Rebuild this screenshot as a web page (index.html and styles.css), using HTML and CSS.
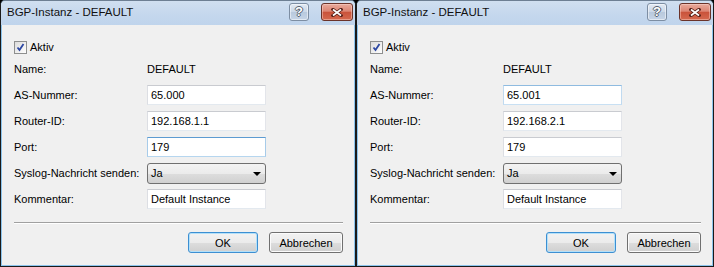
FILE: index.html
```html
<!DOCTYPE html>
<html lang="de">
<head>
    <meta charset="UTF-8">
    <title>BGP-Instanz - DEFAULT</title>
    <link rel="stylesheet" href="styles.css">
</head>
<body>
    <div class="desk">
        <div class="dialog">
            <div class="titlebar">
                <span class="title">BGP-Instanz - DEFAULT</span>
                <span class="tb-btn tb-help">?</span>
                <span class="tb-btn tb-close">
                    <svg width="12" height="9" viewBox="0 0 12 9"><path d="M2 1.5 L10 7.5 M10 1.5 L2 7.5" stroke="#5a231b" stroke-width="3.4" stroke-linecap="square"/><path d="M2 1.5 L10 7.5 M10 1.5 L2 7.5" stroke="#fff" stroke-width="1.6"/></svg>
                </span>
            </div>
            <div class="content">
                <div class="check-row">
                    <span class="checkbox"><svg width="11" height="11" viewBox="0 0 11 11"><path d="M2.5 5.5 L4.5 8 L8.5 2" fill="none" stroke="#2c47a3" stroke-width="1.8"/></svg></span>
                    <span>Aktiv</span>
                </div>
                <div class="form">
                    <span class="lbl">Name:</span><span class="val">DEFAULT</span>
                    <span class="lbl">AS-Nummer:</span><span class="field">65.000</span>
                    <span class="lbl">Router-ID:</span><span class="field">192.168.1.1</span>
                    <span class="lbl">Port:</span><span class="field focus">179</span>
                    <span class="lbl">Syslog-Nachricht senden:</span><span class="select">Ja<i class="arrow"></i></span>
                    <span class="lbl">Kommentar:</span><span class="field">Default Instance</span>
                </div>
                <div class="sep"></div>
                <div class="buttons">
                    <button class="btn btn-ok">OK</button>
                    <button class="btn btn-cancel">Abbrechen</button>
                </div>
            </div>
        </div>

        <div class="dialog dialog-wide">
            <div class="titlebar">
                <span class="title">BGP-Instanz - DEFAULT</span>
                <span class="tb-btn tb-help">?</span>
                <span class="tb-btn tb-close">
                    <svg width="12" height="9" viewBox="0 0 12 9"><path d="M2 1.5 L10 7.5 M10 1.5 L2 7.5" stroke="#5a231b" stroke-width="3.4" stroke-linecap="square"/><path d="M2 1.5 L10 7.5 M10 1.5 L2 7.5" stroke="#fff" stroke-width="1.6"/></svg>
                </span>
            </div>
            <div class="content">
                <div class="check-row">
                    <span class="checkbox"><svg width="11" height="11" viewBox="0 0 11 11"><path d="M2.5 5.5 L4.5 8 L8.5 2" fill="none" stroke="#2c47a3" stroke-width="1.8"/></svg></span>
                    <span>Aktiv</span>
                </div>
                <div class="form">
                    <span class="lbl">Name:</span><span class="val">DEFAULT</span>
                    <span class="lbl">AS-Nummer:</span><span class="field focus-soft">65.001</span>
                    <span class="lbl">Router-ID:</span><span class="field">192.168.2.1</span>
                    <span class="lbl">Port:</span><span class="field">179</span>
                    <span class="lbl">Syslog-Nachricht senden:</span><span class="select">Ja<i class="arrow"></i></span>
                    <span class="lbl">Kommentar:</span><span class="field">Default Instance</span>
                </div>
                <div class="sep"></div>
                <div class="buttons">
                    <button class="btn btn-ok">OK</button>
                    <button class="btn btn-cancel">Abbrechen</button>
                </div>
            </div>
        </div>
    </div>
</body>
</html>
```

FILE: styles.css
```css
body {
    margin: 0;
    background: #000;
    font-family: "Liberation Sans", Arial, sans-serif;
    font-size: 11px;
    color: #000;
}

.desk {
    display: flex;
    height: 267px;
}

.dialog {
    width: 356px;
    box-sizing: border-box;
    border: 1px solid #1a1a1a;
    border-top-color: #6d7f93;
    border-radius: 5px 5px 0 0;
    background: #8cc4ec;
    padding: 0 1px 1px;
    display: flex;
    flex-direction: column;
}

.dialog-wide {
    flex: 1;
}

.titlebar {
    height: 24px;
    display: flex;
    align-items: flex-start;
    padding: 2px 2px 0 6px;
    box-sizing: border-box;
    background: linear-gradient(#d0dff0, #c4d7ed 60%, #bfd4ec);
    margin: 0 -1px;
    border-radius: 4px 4px 0 0;
}

.title {
    flex: 1;
    font-size: 11.5px;
    line-height: 19px;
    color: #111;
}

.tb-btn {
    height: 18px;
    box-sizing: border-box;
    border-radius: 3px;
    display: flex;
    align-items: center;
    justify-content: center;
}

.tb-help {
    width: 20px;
    margin-right: 12px;
    border: 1px solid #7d8ea3;
    background: linear-gradient(#e1e9f3, #cbd8e8 50%, #b8c9dd 51%, #c6d5e7);
    box-shadow: inset 0 0 0 1px rgba(255, 255, 255, 0.5);
    color: #fff;
    font-weight: bold;
    font-size: 13px;
    line-height: 16px;
    text-shadow: 1px 0 0 #55616f, -1px 0 0 #55616f, 0 1px 0 #55616f, 0 -1px 0 #55616f;
}

.tb-close {
    width: 32px;
    border: 1px solid #6b3329;
    background: linear-gradient(#e9aa9c, #dc8573 45%, #c9533b 52%, #d5694f);
    box-shadow: inset 0 0 0 1px rgba(255, 220, 210, 0.45);
}

.content {
    flex: 1;
    background: #f0f0f0;
    padding: 12px 11px 0 12px;
}

.check-row {
    height: 20px;
    display: flex;
    align-items: center;
    gap: 3px;
    margin-bottom: 2px;
}

.checkbox {
    width: 13px;
    height: 13px;
    box-sizing: border-box;
    border: 1px solid #8e8f8f;
    background: linear-gradient(135deg, #dcdcdc, #fefefe);
    display: flex;
    align-items: center;
    justify-content: center;
}

.form {
    display: grid;
    grid-template-columns: 133px 119px;
    grid-auto-rows: 20px;
    row-gap: 6px;
    align-items: center;
}

.lbl,
.val {
    line-height: 20px;
}

.field {
    height: 20px;
    box-sizing: border-box;
    border: 1px solid;
    border-color: #c9cbd0 #e3e5ea #e3e9ef #dcdee3;
    background: #fff;
    padding: 0 3px;
    line-height: 18px;
}

.field.focus {
    border-color: #5d9bd1 #a7cbe9 #b6d6ef #a7cbe9;
}

.field.focus-soft {
    border-color: #8fbbe0 #c0daf0 #c8e0f3 #c0daf0;
}

.select {
    position: relative;
    height: 21px;
    box-sizing: border-box;
    border: 1px solid #707070;
    border-radius: 3px;
    background: linear-gradient(#f3f3f3, #ebebeb 50%, #dddddd 51%, #d0d0d0);
    padding: 0 3px;
    line-height: 19px;
}

.arrow {
    position: absolute;
    right: 4px;
    top: 8px;
    border-left: 4px solid transparent;
    border-right: 4px solid transparent;
    border-top: 4px solid #000;
}

.sep {
    margin-top: 13px;
    height: 1px;
    background: #a0a0a0;
    border-bottom: 1px solid #fff;
}

.buttons {
    display: flex;
    justify-content: flex-end;
    gap: 11px;
    margin-top: 8px;
}

.btn {
    height: 21px;
    box-sizing: border-box;
    border: 1px solid #707070;
    border-radius: 3px;
    background: linear-gradient(#f2f2f2, #ebebeb 50%, #dddddd 51%, #cfcfcf);
    box-shadow: inset 0 0 0 1px #fbfbfb;
    font-family: inherit;
    font-size: 11px;
    color: #000;
    padding: 0;
}

.btn-ok {
    width: 70px;
    border-color: #3c8fd2;
    box-shadow: inset 0 0 0 1px #b3e0f9;
}

.btn-cancel {
    width: 74px;
}
```
